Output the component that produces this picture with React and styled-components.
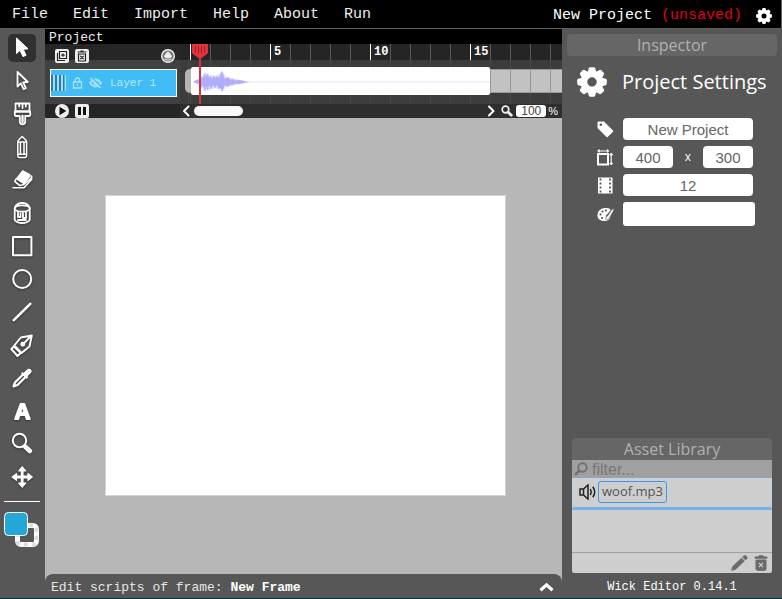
import React from 'react';
import styled, { createGlobalStyle } from 'styled-components';

const mono = '"Liberation Mono", "Courier New", monospace';
const sans = '"Liberation Sans", Arial, sans-serif';
const humanist = '"Open Sans", "Noto Sans", sans-serif';
const gray = '#575757';

const GlobalStyle = createGlobalStyle`
  *, *::before, *::after { box-sizing: border-box; }
  body { margin: 0; background: ${gray}; }
  button { border: 0; padding: 0; background: none; color: inherit; font: inherit; cursor: pointer; }
  input { border: 0; padding: 0; margin: 0; min-width: 0; }
  svg { display: block; flex: none; }
`;

const Page = styled.div`
  display: flex;
  flex-direction: column;
  height: 100vh;
  background: ${gray};
  color: #fff;
  font-family: ${mono};
  border-bottom: 1px solid #0c3236;
`;

const MenuBar = styled.header`
  display: flex;
  align-items: center;
  justify-content: space-between;
  height: 29px;
  flex: none;
  padding: 2px 9px 0 12px;
  background: #000;
  border-bottom: 1px solid #5e5e5e;
  border-right: 1px solid #5e5e5e;
  font-size: 15px;
`;

const Menus = styled.nav`
  display: flex;
  gap: 25px;
`;

const MenuButton = styled.button`
  line-height: 20px;
  color: #eee;
`;

const ProjectStatus = styled.div`
  display: flex;
  align-items: center;
  gap: 14px;
  line-height: 20px;
  padding-top: 2px;
`;

const Unsaved = styled.span`
  color: #e3000f;
`;

const Workspace = styled.div`
  display: grid;
  grid-template-columns: 45px minmax(0, 1fr) 220px;
  flex: 1;
  min-height: 0;
`;

const ToolRail = styled.aside`
  display: flex;
  flex-direction: column;
  align-items: center;
  gap: 5px;
  padding: 5px 1px 0 0;
`;

const ToolButton = styled.button`
  width: 28px;
  height: 28px;
  border-radius: 5px;
  background: ${(p) => (p.$active ? '#303030' : 'transparent')};
  svg { filter: drop-shadow(0 1px 1px #333); }
`;

const RailDivider = styled.hr`
  width: 36px;
  margin: 5px 0;
  border: 0;
  border-top: 1px solid #fff;
`;

const SwatchButton = styled.button`
  width: 36px;
  height: 36px;
`;

const Center = styled.main`
  display: flex;
  flex-direction: column;
  min-width: 0;
  background: #b7b7b7;
`;

const Timeline = styled.section`
  flex: none;
`;

const TimelineTitle = styled.h2`
  margin: 0;
  padding-left: 4px;
  height: 15px;
  line-height: 17px;
  background: #000;
  color: #eee;
  font-size: 13px;
  font-weight: 400;
`;

const TimelineGrid = styled.div`
  display: grid;
  grid-template-columns: 135px minmax(0, 1fr);
  grid-template-rows: 16px 44px 14px;
`;

const LayerTools = styled.div`
  display: flex;
  align-items: center;
  gap: 6px;
  padding: 8px 5px 0 10px;
  background: #262626;
`;

const LayerToolButton = styled.button`
  width: 14px;
  height: 14px;
  z-index: 1;
  &:last-child { margin-left: auto; }
`;

const LayerCell = styled.div`
  padding: 9px 3px 7px 5px;
  background: #414141;
`;

const LayerRow = styled.div`
  display: flex;
  align-items: center;
  gap: 6px;
  height: 28px;
  border: 1px solid #fff;
  background: #42bcf4;
  color: #b9e8ff;
  font-size: 11px;
`;

const LayerName = styled.span`
  padding-left: 2px;
`;

const FrameArea = styled.div`
  position: relative;
  grid-column: 2;
  grid-row: 1 / 3;
  display: grid;
  grid-template-rows: 16px 44px;
  overflow: hidden;
`;

const Ruler = styled.div`
  display: flex;
  padding-left: 10px;
  background: repeating-linear-gradient(90deg, #5a5a5a 0 1px, #252525 1px 20px) 10px 0 no-repeat #252525;
`;

const Tick = styled.div`
  flex: 0 1 20px;
  min-width: 0;
  padding-left: 3px;
  border-left: 1px solid ${(p) => (p.$major ? '#fff' : '#5a5a5a')};
  line-height: 16px;
  font-size: 12px;
  font-weight: 700;
  flex-shrink: ${(p) => (p.$last ? 1 : 0)};
`;

const Frames = styled.div`
  display: flex;
  align-items: center;
  padding: 0 0 2px 5px;
  background: repeating-linear-gradient(90deg, #464646 0 1px, #3c3c3c 1px 20px) 10px 0 / 100% 100%;
`;

const FrameHandle = styled.div`
  width: 6px;
  height: 24px;
  background: #b4b4b4;
  border-radius: 5px 0 0 5px;
`;

const SoundFrame = styled.div`
  flex: none;
  width: 299px;
  height: 28px;
  background: #fff;
  border-radius: 2px;
`;

const EmptyFrames = styled.div`
  flex: 1;
  height: 24px;
  border: solid #999;
  border-width: 1px 0;
  background: repeating-linear-gradient(90deg, #999 0 1px, #c2c2c2 1px 20px);
`;

const Playhead = styled.svg`
  position: absolute;
  left: 11px;
  top: 0;
`;

const PlayControls = styled.div`
  display: flex;
  align-items: center;
  gap: 6px;
  padding: 0 0 1px 10px;
  background: #252525;
`;

const ScrollRow = styled.div`
  display: flex;
  align-items: center;
  gap: 3px;
  padding: 0 4px 0 2px;
  background: #2e2e2e;
`;

const ArrowButton = styled.button`
  width: 9px;
  height: 12px;
`;

const ScrollTrack = styled.div`
  flex: 1;
`;

const ScrollThumb = styled.div`
  width: 49px;
  height: 10px;
  border-radius: 5px;
  background: #f8f8f8;
`;

const ZoomInput = styled.input`
  width: 30px;
  height: 12px;
  margin-left: 1px;
  border-radius: 3px;
  background: #fff;
  color: #444;
  font: 12px/12px ${sans};
  text-align: center;
`;

const ZoomLabel = styled.label`
  display: flex;
  align-items: center;
  gap: 2px;
  padding-left: 2px;
  font: 11px/12px ${sans};
`;

const CanvasArea = styled.div`
  flex: 1;
  min-height: 0;
  display: flex;
  align-items: center;
  justify-content: center;
  padding: 0 0 1px 3px;
`;

const Stage = styled.div`
  width: 401px;
  height: 301px;
  background: #fff;
  border: 1px solid #d4d4d4;
`;

const ScriptBar = styled.footer`
  display: flex;
  align-items: center;
  justify-content: space-between;
  height: 24px;
  flex: none;
  padding: 2px 8px 0 6px;
  border-radius: 8px 8px 0 0;
  background: ${gray};
  color: #e6e6e6;
  font-size: 13px;
  strong { color: #fff; }
`;

const SidePanel = styled.aside`
  display: flex;
  flex-direction: column;
  justify-content: space-between;
  min-height: 0;
`;

const Inspector = styled.section`
  padding: 5px;
`;

const PanelTitle = styled.h2`
  margin: 0;
  height: 22px;
  border-radius: 4px 4px ${(p) => (p.$joined ? '0 0' : '4px 4px')};
  background: #666;
  color: #b0b0b0;
  font: 400 16px/22px ${humanist};
  text-align: center;
`;

const SettingsHeading = styled.div`
  display: flex;
  align-items: center;
  gap: 15px;
  padding: 10px 0 0 10px;
`;

const SettingsTitle = styled.h3`
  margin: 0;
  font: 400 20px/32px ${humanist};
  white-space: nowrap;
`;

const Fields = styled.div`
  display: flex;
  flex-direction: column;
  gap: 6px;
  padding: 20px 0 0 30px;
`;

const Field = styled.div`
  display: flex;
  align-items: center;
`;

const FieldLabel = styled.label`
  width: 26px;
`;

const TextInput = styled.input`
  width: ${(p) => (p.$small ? '50px' : '130px')};
  height: 22px;
  padding-top: 1px;
  border-radius: 4px;
  background: #fff;
  color: #666;
  font: 15px/20px ${sans};
  text-align: center;
`;

const Times = styled.span`
  width: 30px;
  text-align: center;
  font: 12px/22px ${humanist};
`;

const ColorButton = styled.button`
  width: 132px;
  height: 24px;
  border-radius: 3px;
  background: #fff;
`;

const AssetSection = styled.section`
  padding: 0 10px;
`;

const FilterRow = styled.label`
  display: flex;
  align-items: center;
  gap: 4px;
  height: 18px;
  padding: 0 2px;
  background: #a0a0a0;
`;

const FilterInput = styled.input`
  flex: 1;
  height: 18px;
  padding-top: 1px;
  background: transparent;
  font: 16px/18px ${sans};
  &::placeholder { color: #777; opacity: 1; }
`;

const AssetList = styled.div`
  height: 75px;
  background: #cecece;
  border-bottom: 1px solid #a0a0a0;
`;

const AssetItem = styled.div`
  display: flex;
  align-items: center;
  gap: 2px;
  height: 32px;
  padding: 0 0 2px 6px;
  border: 1px solid #bcd3ea;
  border-bottom: 3px solid #73afea;
`;

const AssetName = styled.button`
  height: 22px;
  padding: 0 3px 2px;
  border: 1px solid #3b99f0;
  border-radius: 3px;
  color: #555;
  font: 13px/18px ${humanist};
`;

const AssetActions = styled.div`
  display: flex;
  align-items: center;
  justify-content: flex-end;
  gap: 6px;
  height: 20px;
  padding-right: 4px;
  border-radius: 0 0 2px 2px;
  background: #cecece;
`;

const Version = styled.p`
  margin: 0;
  height: 25px;
  line-height: 29px;
  text-align: center;
  font-size: 12px;
`;

function Gear({ size }) {
  return (
    <svg width={size} height={size} viewBox="0 0 30 30" aria-hidden="true">
      <circle cx="15" cy="15" r="8" fill="none" stroke="#fff" strokeWidth="6.5" />
      {[0, 45, 90, 135, 180, 225, 270, 315].map((a) => (
        <path key={a} d="M10.5 6L11.8 1.3Q12.2 0.2 13.2 0.2H16.8Q17.8 0.2 18.2 1.3L19.5 6Z" fill="#fff" transform={`rotate(${a} 15 15)`} />
      ))}
    </svg>
  );
}

const line = { fill: 'none', stroke: '#fff', strokeWidth: 2, strokeLinejoin: 'round', strokeLinecap: 'round' };

const tools = [
  ['Cursor', <path d="M8.5 4V19.5L12 16.3L15 22.6L18 21.3L15.2 15.3L20 14.8Z" fill="#fff" stroke="#fff" strokeLinejoin="round" />],
  ['Path cursor', <path d="M9.5 5V19.5L12.8 16.4L15.6 22.2L17.8 21.2L15.2 15.4L19.8 15Z" {...line} strokeWidth="1.8" />],
  ['Brush', (
    <g {...line} strokeWidth="1.8">
      <path d="M7.5 3.5H21.5V11.5H7.5Z M11.2 4V6.5 M14.5 4V8 M17.8 4V6.5" />
      <path d="M6.8 11.5H22.2V15Q22 16 21 16H17.2V21.5Q17.2 24.3 14.5 24.3Q11.8 24.3 11.8 21.5V16H8Q7 16 6.8 15Z" />
      <path d="M14.5 16V22" strokeWidth="2.4" />
    </g>
  )],
  ['Pencil', <path d="M9.8 8.5Q9.8 7.5 14.2 3.5Q18.6 7.5 18.6 8.5V22.8Q18.6 24.5 17 24.5H11.4Q9.8 24.5 9.8 22.8Z M10 9H18.4 M10 21.3H18.4 M12.4 9V21 M16 9V21" {...line} strokeWidth="1.5" />],
  ['Eraser', (
    <g>
      <path d="M14.5 4L22 8Q23.4 9 22.5 10.5L16 18.5L7.5 13Z" fill="#fff" />
      <path d="M8 13L6.8 15.5L12 19.6L16 18.5L23.8 11.5 M5 21.8H16L23.6 13.5V10" {...line} strokeWidth="1.6" />
    </g>
  )],
  ['Fill bucket', (
    <g {...line} strokeWidth="1.8">
      <ellipse cx="14.2" cy="9.5" rx="7.6" ry="3.2" />
      <path d="M6.7 9.5V21Q9 24 14.2 24Q19.4 24 21.7 21V9.5 M6.8 8.5Q9 4 14.2 4Q19.4 4 21.6 8.5 M10 13V18H12.5V14.5M15 14V19H18V13.5 M10 21H18" />
    </g>
  )],
  ['Rectangle', <rect x="5" y="5" width="18.4" height="18.2" {...line} />],
  ['Ellipse', <circle cx="14.2" cy="14" r="9" {...line} />],
  ['Line', <path d="M5.8 22.2L22.3 5.8" {...line} strokeWidth="2.6" />],
  ['Pen', (
    <g {...line} strokeWidth="1.9">
      <path d="M23.8 4.5L12.8 6.5Q9.2 11 6.3 14.5L13.5 22L21.5 15.5Z M23 5L15.3 13" />
      <circle cx="14.8" cy="13.3" r="1.5" fill="#fff" />
      <path d="M5.8 15.5L3.3 18L9.5 25L12.8 22Z" />
    </g>
  )],
  ['Eyedropper', (
    <g>
      <path d="M15.5 9L18.5 6Q20.5 3.8 22.7 5.2Q24.7 7.2 22.5 9.3L19.5 12.3L20.3 13.5L18.5 15L13 9.5L14.5 8Z" fill="#fff" />
      <path d="M14.5 11L7 18.5L5.5 22.5L9.5 21L17 13.5" {...line} strokeWidth="2.2" />
    </g>
  )],
  ['Text', <text x="14.5" y="22" textAnchor="middle" fill="#fff" stroke="#fff" strokeWidth="1.8" strokeLinejoin="round" fontFamily="Liberation Sans, sans-serif" fontWeight="700" fontSize="22">A</text>],
  ['Zoom', (
    <g {...line}>
      <circle cx="11.5" cy="10.5" r="6.7" />
      <path d="M17 16.5L21.8 21" strokeWidth="4.6" />
    </g>
  )],
  ['Pan', (
    <g>
      <path d="M14.2 7V21 M7 14H21" {...line} strokeWidth="2.8" />
      <path d="M14.2 3.8L17.6 8H10.8Z M14.2 24.2L17.6 20H10.8Z M4.2 14L8.5 10.6V17.4Z M24.2 14L20 10.6V17.4Z" fill="#fff" stroke="#fff" strokeLinejoin="round" strokeWidth="1.2" />
    </g>
  )],
];

const Trash = () => (
  <svg width="14" height="16" viewBox="0 0 14 16" aria-hidden="true">
    <path d="M1 2H4L5 0.8H9L10 2H13V3.2H1Z M2 5H12V14Q12 15.3 10.5 15.3H3.5Q2 15.3 2 14Z" fill="#6b6b6b" stroke="#6b6b6b" />
    <path d="M5 7.8L9 12.2 M9 7.8L5 12.2" stroke="#cecece" strokeWidth="1.2" />
  </svg>
);

const Magnifier = () => (
  <svg width="12" height="12" viewBox="0 0 12 12" aria-hidden="true">
    <circle cx="4.5" cy="4.5" r="3.3" fill="none" stroke="#eee" strokeWidth="1.7" />
    <path d="M7.2 7.2L10.3 10.3" stroke="#eee" strokeWidth="2.8" strokeLinecap="round" />
  </svg>
);

const Waveform = () => (
  <svg width="299" height="28" viewBox="0 0 299 28" aria-hidden="true">
    <path d="M40 15H299" stroke="#f1f0fc" strokeWidth="2" />
    <path d="M3 15L9 11L14 6L18 8L24 9L32 5L35 10L45 12L60 15L45 18L35 20L32 24L24 21L18 23L14 24L9 19Z" fill="#deddfd" />
    <path
      d="M2 15L6 12.5L9 13L11 9L12 12L14 5L15 10L17 6L18 11L20 9L21 12L23 8L24 11L26 9L27 11L29 9L30 6L31 3.5L33 10L34 12L37 10L39 12.5L42 12L44 13.5L48 13L57 15L48 17L44 16.5L42 18L39 17.5L37 20L34 18L33 20L31 25.5L30 21L28 22L26 18L24 21L22 18L20 22L18 18L17 24L15 19L14 25L12 18L10 21L8 17Z"
      fill="#b0aefb"
    />
  </svg>
);

const frameNumbers = Array.from({ length: 19 }, (_, i) => i + 1);

export default function App() {
  return (
    <Page>
      <GlobalStyle />
      <MenuBar>
        <Menus>
          {['File', 'Edit', 'Import', 'Help', 'About', 'Run'].map((m) => <MenuButton key={m}>{m}</MenuButton>)}
        </Menus>
        <ProjectStatus>
          <span>New Project <Unsaved>(unsaved)</Unsaved></span>
          <button aria-label="Settings"><Gear size={16} /></button>
        </ProjectStatus>
      </MenuBar>

      <Workspace>
        <ToolRail>
          {tools.map(([name, icon], i) => (
            <ToolButton key={name} aria-label={name} $active={i === 0}>
              <svg width="28" height="28" viewBox="0 0 28 28">{icon}</svg>
            </ToolButton>
          ))}
          <RailDivider />
          <SwatchButton aria-label="Fill and stroke colors">
            <svg width="36" height="36" viewBox="0 0 36 36">
              <rect x="13.5" y="13.5" width="19" height="19" rx="3.5" fill="none" stroke="#fff" strokeWidth="5" />
              <rect x="13.5" y="13.5" width="19" height="19" rx="3.5" fill="none" stroke="#ddd" strokeWidth="4" strokeDasharray="4 4" />
              <rect x="0.5" y="0.5" width="23" height="23" rx="4" fill="#24a6d6" stroke="#fff" />
            </svg>
          </SwatchButton>
        </ToolRail>

        <Center>
          <Timeline>
            <TimelineTitle>Project</TimelineTitle>
            <TimelineGrid>
              <LayerTools>
                <LayerToolButton aria-label="Add layer">
                  <svg width="14" height="14" viewBox="0 0 14 14">
                    <rect width="14" height="14" rx="2" fill="#eee" />
                    <path d="M4.5 2.5H11.5V9.5H4.5Z M2.5 4V11.5H10 M8 4.5V7.8 M6.3 6.1H9.7" fill="none" stroke="#222" strokeWidth="1.2" />
                  </svg>
                </LayerToolButton>
                <LayerToolButton aria-label="Delete layer">
                  <svg width="14" height="14" viewBox="0 0 14 14">
                    <rect width="14" height="14" rx="2" fill="#eee" />
                    <path d="M2.5 3H11.5 M5.5 2H8.5 M3.5 5H10.5V12H3.5Z M5.3 6.8L8.7 10.2 M8.7 6.8L5.3 10.2" fill="none" stroke="#222" strokeWidth="1.2" />
                  </svg>
                </LayerToolButton>
                <LayerToolButton aria-label="Onion skin">
                  <svg width="14" height="14" viewBox="0 0 14 14">
                    <circle cx="7" cy="7" r="6.3" fill="#777" stroke="#eee" strokeWidth="1.4" />
                    <path d="M7 2.5Q10.8 5.5 10.8 7.5Q10.5 9.3 7 9.3Q3.5 9.3 3.2 7.5Q3.2 5.5 7 2.5Z" fill="#eee" />
                    <path d="M3.5 10Q7 12.5 10.5 10" fill="none" stroke="#eee" />
                  </svg>
                </LayerToolButton>
              </LayerTools>

              <LayerCell>
                <LayerRow>
                  <svg width="15" height="16" viewBox="0 0 15 16" aria-hidden="true">
                    <path d="M1 0V16M5 0V16M9 0V16M13 0V16" stroke="#277fa8" strokeWidth="2" />
                    <path d="M3 0V16M7 0V16M11 0V16M14.5 0V16" stroke="#a5dcf5" strokeWidth="2" />
                  </svg>
                  <button aria-label="Lock layer">
                    <svg width="11" height="12" viewBox="0 0 11 12">
                      <path d="M1.5 5H9.5V11H1.5Z M3.3 5V3Q3.3 1 5.5 1Q7.7 1 7.7 3V5 M5.5 7.3V8.8" fill="none" stroke="#a9e1fb" strokeWidth="1.3" />
                    </svg>
                  </button>
                  <button aria-label="Hide layer">
                    <svg width="13" height="12" viewBox="0 0 13 12">
                      <path d="M1 6Q6.5 -1 12 6Q6.5 13 1 6Z" fill="none" stroke="#a9e1fb" strokeWidth="1.8" />
                      <circle cx="6.5" cy="6" r="2.2" fill="#a9e1fb" />
                      <path d="M2.5 0.5L12 10" stroke="#42bcf4" strokeWidth="1.4" />
                      <path d="M1.5 1L11.5 11" stroke="#a9e1fb" strokeWidth="1.4" />
                    </svg>
                  </button>
                  <LayerName>Layer 1</LayerName>
                </LayerRow>
              </LayerCell>

              <FrameArea>
                <Ruler>
                  {frameNumbers.map((n) => (
                    <Tick key={n} $major={n === 1 || n % 5 === 0} $last={n === frameNumbers.length}>
                      {n % 5 === 0 ? n : null}
                    </Tick>
                  ))}
                </Ruler>
                <Frames>
                  <FrameHandle />
                  <SoundFrame><Waveform /></SoundFrame>
                  <EmptyFrames />
                </Frames>
                <Playhead width="18" height="60" viewBox="0 0 18 60" aria-hidden="true">
                  <path d="M9 13V60" stroke="#d8333c" strokeWidth="2" />
                  <path d="M1 0H17V9Q14 12 9 15Q4 12 1 9Z" fill="#e0333c" />
                  <path d="M4.5 2V9M7.5 2V10M10.5 2V10M13.5 2V9" stroke="#982028" />
                </Playhead>
              </FrameArea>

              <PlayControls>
                <button aria-label="Play">
                  <svg width="14" height="14" viewBox="0 0 14 14">
                    <circle cx="7" cy="7" r="7" fill="#eee" />
                    <path d="M4.5 2.8L11.3 7L4.5 11.2Z" fill="#111" />
                  </svg>
                </button>
                <button aria-label="Pause">
                  <svg width="14" height="14" viewBox="0 0 14 14">
                    <rect width="14" height="14" rx="2" fill="#eee" />
                    <path d="M4.5 3V11M9.5 3V11" stroke="#111" strokeWidth="3" />
                  </svg>
                </button>
              </PlayControls>
              <ScrollRow>
                <ArrowButton aria-label="Scroll left">
                  <svg width="9" height="12" viewBox="0 0 9 12"><path d="M6.5 1.5L2 6L6.5 10.5" {...line} /></svg>
                </ArrowButton>
                <ScrollTrack><ScrollThumb /></ScrollTrack>
                <ArrowButton aria-label="Scroll right">
                  <svg width="9" height="12" viewBox="0 0 9 12"><path d="M2 1.5L6.5 6L2 10.5" {...line} /></svg>
                </ArrowButton>
                <ZoomLabel>
                  <Magnifier />
                  <ZoomInput aria-label="Zoom percent" defaultValue="100" />%
                </ZoomLabel>
              </ScrollRow>
            </TimelineGrid>
          </Timeline>

          <CanvasArea><Stage /></CanvasArea>

          <ScriptBar>
            <span>Edit scripts of frame: <strong>New Frame</strong></span>
            <button aria-label="Expand script editor">
              <svg width="15" height="10" viewBox="0 0 15 10"><path d="M1.5 8.3L7.5 2.8L13.5 8.3" fill="none" stroke="#fff" strokeWidth="3.2" /></svg>
            </button>
          </ScriptBar>
        </Center>

        <SidePanel>
          <Inspector>
            <PanelTitle>Inspector</PanelTitle>
            <SettingsHeading>
              <Gear size={30} />
              <SettingsTitle>Project Settings</SettingsTitle>
            </SettingsHeading>
            <Fields>
              <Field>
                <FieldLabel htmlFor="name" aria-label="Name">
                  <svg width="17" height="17" viewBox="0 0 17 17">
                    <path fillRule="evenodd" d="M0.5 1.5Q0.5 0.5 1.5 0.5H7L16 9.5Q16.5 10 16 10.7L10.7 16Q10 16.5 9.5 16L0.5 7Z M3.8 2.5A1.3 1.3 0 1 0 3.8 5.1A1.3 1.3 0 1 0 3.8 2.5Z" fill="#fff" />
                  </svg>
                </FieldLabel>
                <TextInput id="name" defaultValue="New Project" />
              </Field>
              <Field>
                <FieldLabel htmlFor="width" aria-label="Size">
                  <svg width="17" height="17" viewBox="0 0 17 17">
                    <rect x="1" y="5" width="10" height="10.5" fill="none" stroke="#fff" strokeWidth="2" />
                    <path d="M1 2H11.5M2.5 0.5L1 2L2.5 3.3M10 0.5L11.5 2L10 3.3M14.2 4.5V15M12.8 6L14.2 4.5L15.6 6M12.8 14L14.2 15.5L15.6 14" fill="none" stroke="#fff" strokeWidth="1.1" />
                  </svg>
                </FieldLabel>
                <TextInput id="width" $small defaultValue="400" />
                <Times>x</Times>
                <TextInput aria-label="Height" $small defaultValue="300" />
              </Field>
              <Field>
                <FieldLabel htmlFor="fps" aria-label="Frame rate">
                  <svg width="17" height="17" viewBox="0 0 17 17">
                    <rect x="1" y="0.5" width="14.5" height="16" fill="#fff" />
                    <path d="M3.5 1.5V16M13 1.5V16" stroke={gray} strokeWidth="1.8" strokeDasharray="2 2" />
                  </svg>
                </FieldLabel>
                <TextInput id="fps" defaultValue="12" />
              </Field>
              <Field>
                <FieldLabel htmlFor="background" aria-label="Background color">
                  <svg width="17" height="17" viewBox="0 0 17 17">
                    <path d="M7.5 2C12 1.5 14 3 13.5 4.5L9 9.5C8 12 10 12.5 13 11C13 14 9 15.5 6 15C2 14 0 12 0.5 8.5Q1 3 7.5 2Z" fill="#fff" />
                    <path d="M8.5 13.5Q8.8 10.5 11 9.5L15 3.5L17 2.5L16.3 5L13 11Q11.5 13.5 8.5 13.5Z" fill="#fff" stroke={gray} strokeWidth="0.5" />
                    <g fill={gray}><circle cx="3.5" cy="8.5" r="1.1" /><circle cx="5.5" cy="5.5" r="1.1" /><circle cx="9" cy="4.5" r="1.1" /><circle cx="5" cy="12" r="1.1" /></g>
                  </svg>
                </FieldLabel>
                <ColorButton id="background" />
              </Field>
            </Fields>
          </Inspector>

          <AssetSection>
            <PanelTitle $joined>Asset Library</PanelTitle>
            <FilterRow>
              <svg width="14" height="14" viewBox="0 0 14 14" aria-hidden="true">
                <circle cx="8.5" cy="5.5" r="4.2" fill="none" stroke="#717171" strokeWidth="2" />
                <path d="M5.2 8.8L2 12" stroke="#717171" strokeWidth="2.6" strokeLinecap="round" />
              </svg>
              <FilterInput aria-label="Filter assets" placeholder="filter..." />
            </FilterRow>
            <AssetList>
              <AssetItem>
                <svg width="17" height="16" viewBox="0 0 17 16" aria-hidden="true">
                  <path d="M1 5H4.5L9 1V15L4.5 11H1Z M4.5 5V11" fill="none" stroke="#222" strokeWidth="1.5" />
                  <path d="M11.3 5Q13 8 11.3 11M13.8 2.8Q17.5 8 13.8 13.2" fill="none" stroke="#222" strokeWidth="1.5" />
                </svg>
                <AssetName>woof.mp3</AssetName>
              </AssetItem>
            </AssetList>
            <AssetActions>
              <button aria-label="Edit asset">
                <svg width="17" height="16" viewBox="0 0 17 16">
                  <path d="M0.5 15.5L1.5 11.5L10.5 3L13.5 6L4.5 14.5Z M11.5 2L13.3 0.5Q14 0 14.8 0.7L16 2Q16.6 2.8 16 3.5L14.5 5Z" fill="#6b6b6b" stroke="#6b6b6b" strokeWidth="0.5" />
                </svg>
              </button>
              <button aria-label="Delete asset"><Trash /></button>
            </AssetActions>
            <Version>Wick Editor 0.14.1</Version>
          </AssetSection>
        </SidePanel>
      </Workspace>
    </Page>
  );
}
